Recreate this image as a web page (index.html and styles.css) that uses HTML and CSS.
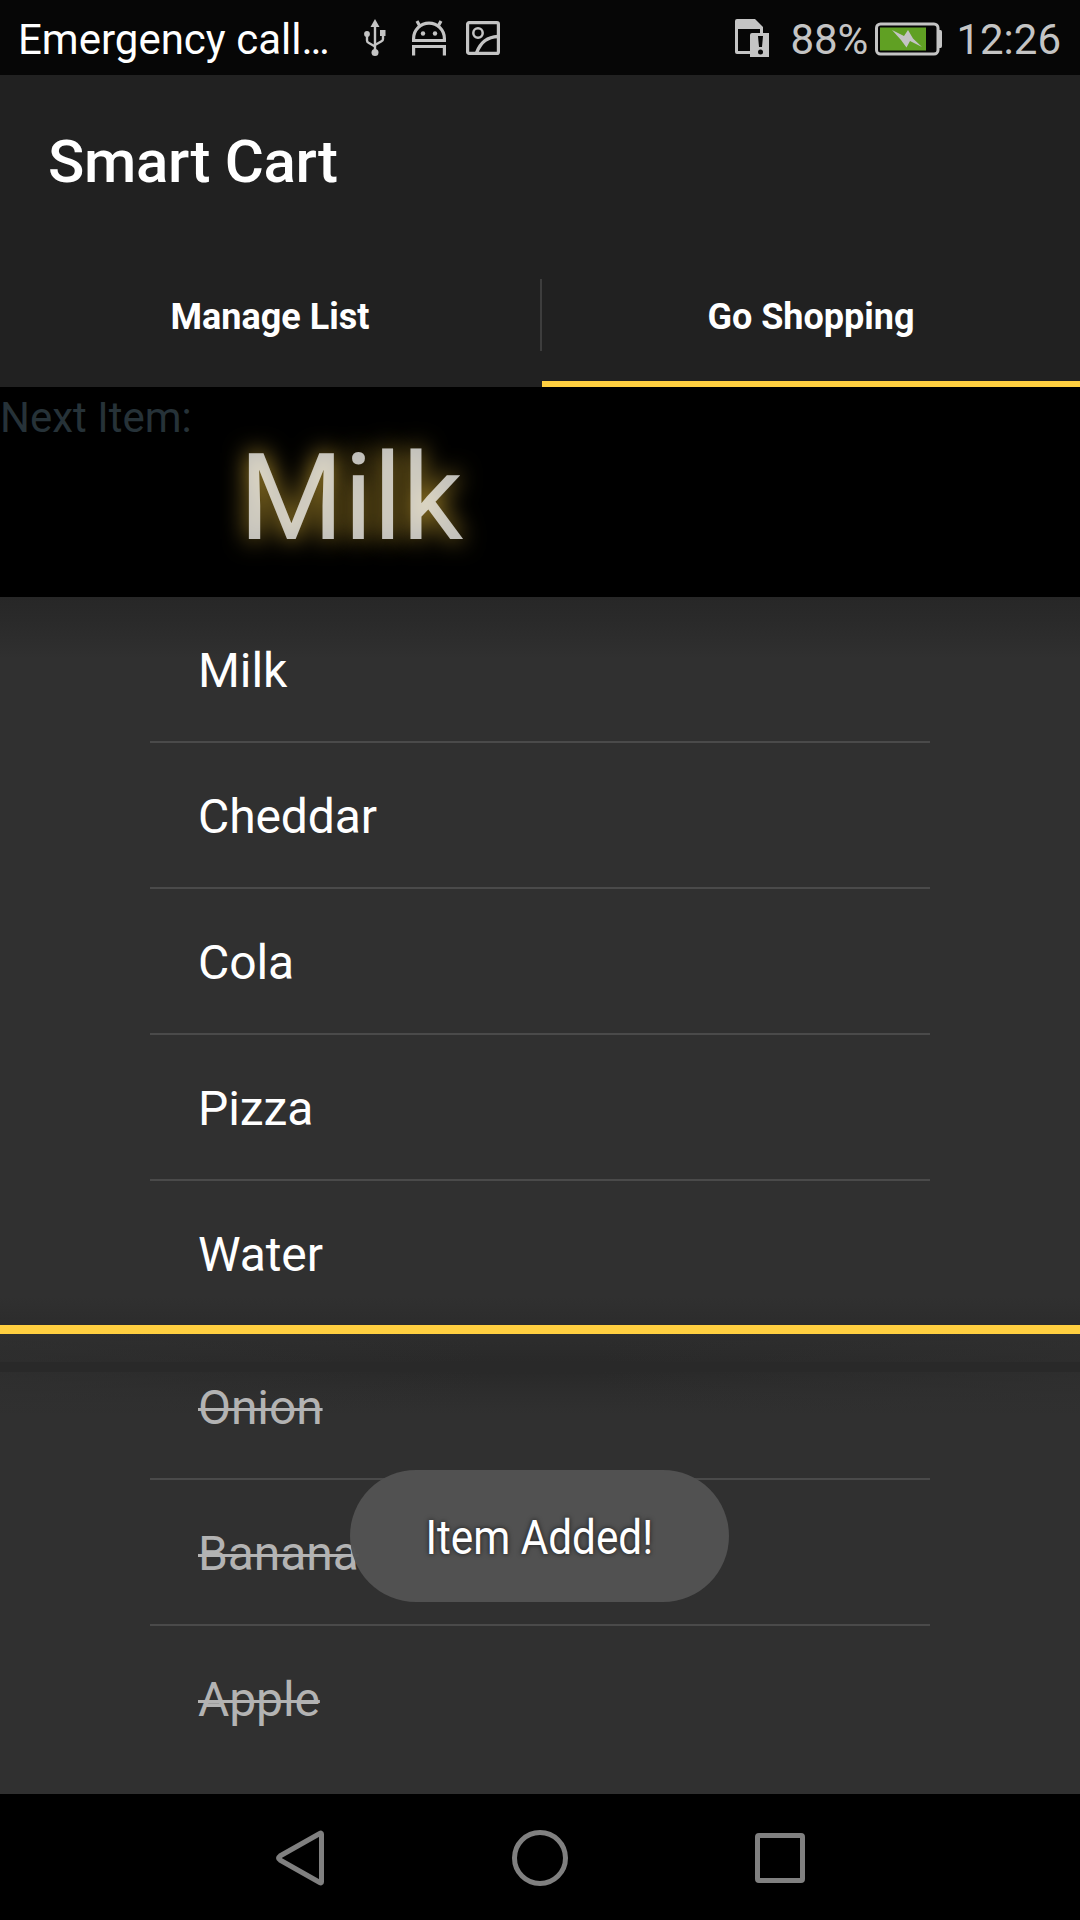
FILE: index.html
```html
<!DOCTYPE html>
<html lang="en">
<head>
<meta charset="utf-8">
<title>Smart Cart</title>
<link rel="stylesheet" href="styles.css">
</head>
<body>
<div class="screen">
  <header class="status">
    <span class="carrier">Emergency call…</span>
    <div class="notifications">
      <svg class="icon" width="24" height="38" viewBox="0 0 24 38"><g fill="none" stroke="#c4c4c4" stroke-width="2.400"><path d="M12 6v26M4 16v5.500q0 1.500 1.500 2.300L12 27.500M20 14v6q0 1.500-1.500 2.300L12 26"/></g><g fill="#c4c4c4"><path d="M12 0l4.500 8h-9z"/><circle cx="4" cy="15" r="2.900"/><path d="M17 11h5.500v6H17z"/><circle cx="12" cy="33.500" r="3.500"/></g></svg>
      <svg class="icon" width="34" height="36" viewBox="0 0 34 36"><g fill="none" stroke="#c4c4c4" stroke-width="3.200"><path d="M1.600 20.500v-2a15.400 15.400 0 0 1 30.800 0v2z"/><path d="M7.500 5.500L5 1M26.500 5.500L29 1"/><path d="M1.600 35.500V26.500h30.800v9"/></g><circle cx="11" cy="13.500" r="2.200" fill="#c4c4c4"/><circle cx="23" cy="13.500" r="2.200" fill="#c4c4c4"/></svg>
      <svg class="icon" width="34" height="36" viewBox="0 0 34 36"><g fill="none" stroke="#c4c4c4" stroke-width="3.200"><rect x="1.600" y="2.600" width="30.800" height="30.800" rx="1.500"/><circle cx="12" cy="13" r="4.700" stroke-width="2.500"/><path d="M10.500 33C15 21 22 17 32 16.500" stroke-width="3.500"/></g></svg>
    </div>
    <div class="system">
      <svg class="icon" width="35" height="38" viewBox="0 0 35 38"><path fill="#c4c4c4" fill-rule="evenodd" d="M2 0h18l8 8v6h6v24H15v-3H2q-2 0-2-2V2q0-2 2-2zM3 10v22h12V16q0-2 2-2h8v-4z"/><path fill="#080808" d="M23 17h5l-1 11h-3z"/><circle cx="25.500" cy="33" r="2.500" fill="#080808"/></svg>
      <span class="percent">88%</span>
      <svg class="icon" width="68" height="34" viewBox="0 0 68 34"><rect x="1.500" y="2" width="61.500" height="30" rx="4" fill="none" stroke="#c4c4c4" stroke-width="3"/><path d="M63 8h2.500q1.500 0 1.500 2v14q0 2-1.500 2H63z" fill="#c4c4c4"/><path d="M5 5.500h46v23H5z" fill="#60a023"/><path d="M17 8l12 6 4-6 5 8.500 9 8.500-12-6-3.500 6.500L26 18z" fill="#c4c4c4"/></svg>
      <span class="clock">12:26</span>
    </div>
  </header>

  <div class="appbar">
    <h1 class="title">Smart Cart</h1>
    <nav class="tabs">
      <div class="tab"><span>Manage List</span></div>
      <div class="tab-divider"></div>
      <div class="tab tab-active"><span>Go Shopping</span></div>
    </nav>
  </div>

  <section class="next">
    <span class="next-label">Next Item:</span>
    <span class="next-item">Milk</span>
  </section>

  <ul class="list list-todo">
    <li class="row">Milk</li>
    <li class="row">Cheddar</li>
    <li class="row">Cola</li>
    <li class="row">Pizza</li>
    <li class="row">Water</li>
  </ul>
  <div class="separator"></div>
  <ul class="list list-done">
    <li class="row"><s>Onion</s></li>
    <li class="row"><s>Banana</s></li>
    <li class="row"><s>Apple</s></li>
  </ul>

  <footer class="navbar">
    <svg width="60" height="60" viewBox="0 0 60 60"><path d="M51.500 6v48q0 1.500-1.700.5L10 32q-3-2 0-4L49.800 5.500q1.700-1 1.700.5z"/></svg>
    <svg width="60" height="60" viewBox="0 0 60 60"><circle cx="30" cy="30" r="25.500"/></svg>
    <svg width="60" height="60" viewBox="0 0 60 60"><rect x="7.500" y="7.500" width="45" height="45" rx="1.500"/></svg>
  </footer>

  <div class="toast"><span class="toast-text">Item Added!</span></div>
</div>
</body>
</html>
```
FILE: styles.css
```css
* { box-sizing: border-box; }
body {
  margin: 0;
  background: #303030;
  font-family: Roboto, "Noto Sans", sans-serif;
  color: #fff;
}
.screen {
  position: relative;
  width: 1080px;
  height: 1920px;
  display: flex;
  flex-direction: column;
  overflow: hidden;
}
.status {
  height: 75px;
  flex: none;
  display: flex;
  align-items: center;
  padding: 4px 19px 0 18px;
  background: #060606;
  font-size: 42px;
  line-height: 50px;
  white-space: nowrap;
}
.icon { display: block; flex: none; margin-top: -4px; }
.carrier { width: 345px; }
.notifications { display: flex; align-items: center; }
.notifications .icon + .icon { margin-left: 20px; }
.notifications .icon:nth-child(2) { margin-left: 25px; }
.system {
  display: flex;
  align-items: center;
  margin-left: auto;
  color: #c4c4c4;
}
.percent { margin-left: 20px; width: 85px; }
.percent + .icon { margin-top: -1px; }
.clock { margin-left: 13px; }

.appbar { height: 312px; flex: none; background: #212121; }
.title {
  height: 168px;
  margin: 0;
  padding: 2px 48px 0;
  font-size: 60px;
  font-weight: 500;
  line-height: 170px;
  letter-spacing: -0.3px;
}
.tabs { display: flex; height: 144px; }
.tab {
  width: 540px;
  display: flex;
  align-items: center;
  justify-content: center;
  padding-top: 4px;
  font-size: 36px;
  font-weight: 700;
}
.tab-active { width: 538px; padding-top: 10px; border-bottom: 6px solid #ffcf40; }
.tab-divider { width: 2px; height: 72px; margin-top: 36px; background: #3d3d3d; }

.next { height: 210px; flex: none; display: flex; background: #000; }
.next-label {
  width: 239px;
  padding-top: 6px;
  font-size: 42px;
  line-height: 50px;
  color: #263238;
}
.next-item {
  padding-top: 41px;
  font-size: 120px;
  line-height: 140px;
  color: rgba(255, 255, 255, 0.73);
  text-shadow: 0 0 24px rgba(255, 207, 64, 0.75);
}

.list { margin: 0; padding: 0 150px; list-style: none; }
.list-todo {
  height: 728px;
  background: linear-gradient(#272727, #2a2a2a 24px, #303030 62px, #303030 700px, #2c2c2c);
}
.list-done {
  height: 460px;
  background:
    linear-gradient(90deg, rgba(48, 48, 48, 0.7), rgba(48, 48, 48, 0) 45%, rgba(48, 48, 48, 0) 55%, rgba(48, 48, 48, 0.7)) 0 38px / 100% 60px no-repeat,
    linear-gradient(90deg, rgba(48, 48, 48, 0.6), rgba(48, 48, 48, 0) 45%, rgba(48, 48, 48, 0) 55%, rgba(48, 48, 48, 0.6)) 0 0 / 100% 28px no-repeat,
    linear-gradient(#2d2d2d, #292929 28px, #292929 38px, #2d2d2d 58px, #303030 80px);
}
.row {
  height: 146px;
  padding: 3px 48px 0;
  border-bottom: 2px solid #4a4a4a;
  font-size: 48px;
  line-height: 142px;
  letter-spacing: -0.1px;
}
.row:last-child { border-bottom: 0; }
.list-done .row { color: #b3b3b3; }
.row s { text-decoration-thickness: 3px; }
.separator { height: 9px; flex: none; background: #ffcf40; }

.navbar {
  height: 126px;
  flex: none;
  display: flex;
  align-items: center;
  justify-content: center;
  gap: 180px;
  padding-top: 2px;
  background: #000;
}
.navbar svg { fill: none; stroke: #808080; stroke-width: 5; }

.toast {
  position: absolute;
  left: 350px;
  top: 1470px;
  width: 379px;
  height: 132px;
  border-radius: 66px;
  background: rgba(82, 82, 82, 0.98);
  display: flex;
  align-items: center;
  justify-content: center;
}
.toast-text {
  font-size: 48px;
  line-height: 56px;
  padding-top: 3px;
  white-space: nowrap;
  transform: scaleX(0.88);
  text-shadow: 0 0 6px rgba(0, 0, 0, 0.7);
}
```
